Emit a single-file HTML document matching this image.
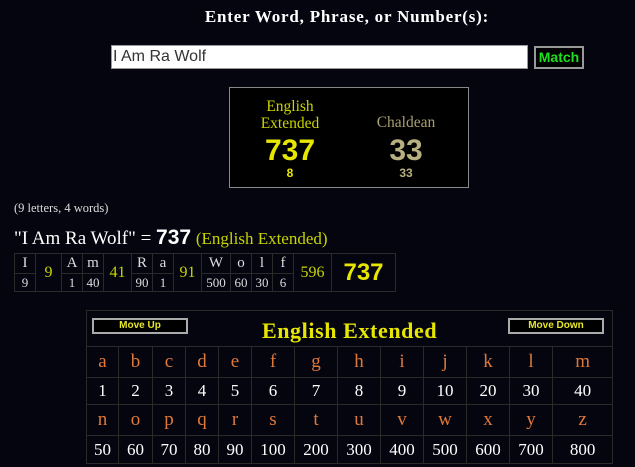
<!DOCTYPE html>
<html><head><meta charset="utf-8"><style>
body{margin:0;width:635px;height:467px;background:#050510;overflow:hidden;position:relative;font-family:"Liberation Serif",serif;color:#fff}
.a{position:absolute}
table{border-collapse:collapse;table-layout:fixed;position:absolute}
td{border:1px solid #2a2a2a;text-align:center;padding:0}
.btn{position:absolute;border:2px solid #aaa;background:#000;color:#e6e62a;font:bold 10px "Liberation Sans",sans-serif;text-align:center;line-height:12px;box-sizing:border-box}
</style></head><body>
<div class="a" style="left:0;width:694px;top:7px;text-align:center;font-weight:bold;font-size:17px;letter-spacing:0.8px">Enter Word, Phrase, or Number(s):</div>
<div class="a" style="left:111px;top:45px;width:417px;height:24px;background:#fff;border:1px solid #999;box-sizing:border-box;color:#333;font:16px 'Liberation Sans',sans-serif;line-height:22px;padding-left:1px">I Am Ra Wolf</div>
<div class="a" style="left:534px;top:46px;width:50px;height:23px;border:2px solid #999;background:#000;box-sizing:border-box;color:#1ee01e;font:bold 14px 'Liberation Sans',sans-serif;line-height:19px;text-align:center">Match</div>
<div class="a" style="left:229px;top:87px;width:240px;height:101px;border:1px solid #888;box-sizing:border-box;background:#000"></div>
<div class="a" style="left:240px;top:98px;width:100px;text-align:center;color:#c8d400;font-size:15.5px;line-height:17px">English<br>Extended</div>
<div class="a" style="left:240px;top:134px;width:100px;text-align:center;color:#e6e600;font:bold 30px 'Liberation Sans',sans-serif">737</div>
<div class="a" style="left:240px;top:166px;width:100px;text-align:center;color:#e6e600;font:bold 12px 'Liberation Sans',sans-serif">8</div>
<div class="a" style="left:356px;top:114px;width:100px;text-align:center;color:#a8a070;font-size:15.5px">Chaldean</div>
<div class="a" style="left:356px;top:134px;width:100px;text-align:center;color:#b8b080;font:bold 30px 'Liberation Sans',sans-serif">33</div>
<div class="a" style="left:356px;top:166px;width:100px;text-align:center;color:#b8b080;font:bold 12px 'Liberation Sans',sans-serif">33</div>
<div class="a" style="left:14px;top:201px;font-size:12.5px;color:#ddd">(9 letters, 4 words)</div>
<div class="a" style="left:14px;top:226px;font-size:19px;color:#fff">"I Am Ra Wolf" = <b style="font:bold 21px 'Liberation Sans',sans-serif">737</b> <span style="color:#c8d400;font-size:17px">(English Extended)</span></div>
<table style="left:14px;top:253px;width:381px;height:39px;font-size:13px;color:#ddd">
<colgroup><col style="width:21px"><col style="width:26px"><col style="width:21px"><col style="width:21px"><col style="width:28px"><col style="width:21px"><col style="width:21px"><col style="width:28px"><col style="width:29px"><col style="width:21px"><col style="width:21px"><col style="width:21px"><col style="width:38px"><col style="width:64px"></colgroup>
<tr style="height:20px;font-size:15px"><td>I</td><td rowspan="2" style="color:#c8d400;font-size:16px">9</td><td>A</td><td>m</td><td rowspan="2" style="color:#c8d400;font-size:16px">41</td><td>R</td><td>a</td><td rowspan="2" style="color:#c8d400;font-size:16px">91</td><td>W</td><td>o</td><td>l</td><td>f</td><td rowspan="2" style="color:#c8d400;font-size:16px">596</td><td rowspan="2" style="color:#e6e600;font:bold 24px 'Liberation Sans',sans-serif">737</td></tr>
<tr><td>9</td><td>1</td><td>40</td><td>90</td><td>1</td><td>500</td><td>60</td><td>30</td><td>6</td></tr>
</table>
<table style="left:86px;top:310px;width:526px;height:153px;font-size:17px">
<colgroup><col style="width:32px"><col style="width:34px"><col style="width:33px"><col style="width:33px"><col style="width:33px"><col style="width:43px"><col style="width:43px"><col style="width:43px"><col style="width:43px"><col style="width:43px"><col style="width:43px"><col style="width:43px"><col style="width:60px"></colgroup>
<tr style="height:36px"><td colspan="13" style="color:#e6e600;font-weight:bold;font-size:22px;letter-spacing:0.6px;padding-top:4px">English Extended</td></tr>
<tr style="height:31px;color:#e07838;font-size:19px"><td>a</td><td>b</td><td>c</td><td>d</td><td>e</td><td>f</td><td>g</td><td>h</td><td>i</td><td>j</td><td>k</td><td>l</td><td>m</td></tr>
<tr style="height:27px"><td>1</td><td>2</td><td>3</td><td>4</td><td>5</td><td>6</td><td>7</td><td>8</td><td>9</td><td>10</td><td>20</td><td>30</td><td>40</td></tr>
<tr style="height:31px;color:#e07838;font-size:19px"><td>n</td><td>o</td><td>p</td><td>q</td><td>r</td><td>s</td><td>t</td><td>u</td><td>v</td><td>w</td><td>x</td><td>y</td><td>z</td></tr>
<tr style="height:28px"><td>50</td><td>60</td><td>70</td><td>80</td><td>90</td><td>100</td><td>200</td><td>300</td><td>400</td><td>500</td><td>600</td><td>700</td><td>800</td></tr>
</table>
<div class="btn" style="left:92px;top:318px;width:96px;height:16px">Move Up</div>
<div class="btn" style="left:508px;top:318px;width:96px;height:16px">Move Down</div>
</body></html>
